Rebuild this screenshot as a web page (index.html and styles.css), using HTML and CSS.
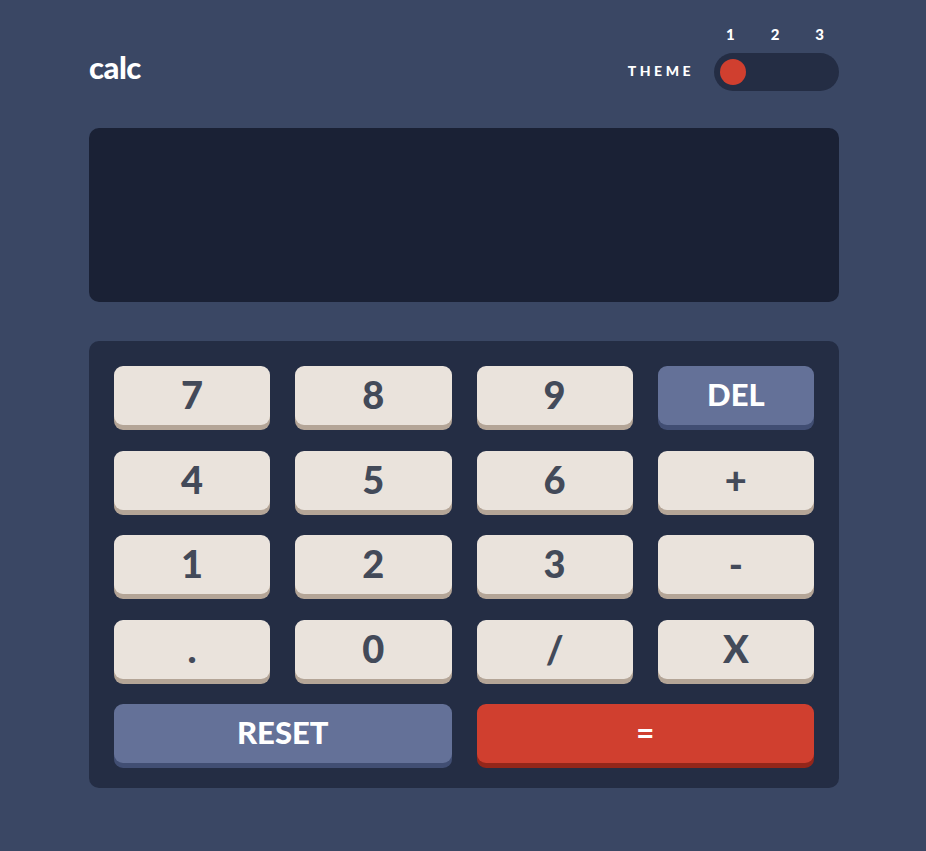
FILE: index.html
```html
<!DOCTYPE html>
<html lang="en">
<head>
<meta charset="utf-8">
<title>calc</title>
<link rel="stylesheet" href="styles.css">
</head>
<body>
<main class="calc">
  <header class="top">
    <h1 class="logo">calc</h1>
    <div class="theme">
      <span class="theme-label">THEME</span>
      <div class="theme-switch">
        <div class="theme-nums"><span>1</span><span>2</span><span>3</span></div>
        <div class="toggle"><span class="knob"></span></div>
      </div>
    </div>
  </header>
  <section class="screen"></section>
  <section class="keypad">
    <button class="key">7</button>
    <button class="key">8</button>
    <button class="key">9</button>
    <button class="key key-blue">DEL</button>
    <button class="key">4</button>
    <button class="key">5</button>
    <button class="key">6</button>
    <button class="key">+</button>
    <button class="key">1</button>
    <button class="key">2</button>
    <button class="key">3</button>
    <button class="key">-</button>
    <button class="key">.</button>
    <button class="key">0</button>
    <button class="key">/</button>
    <button class="key">X</button>
    <button class="key key-blue key-wide">RESET</button>
    <button class="key key-red key-wide">=</button>
  </section>
</main>
</body>
</html>
```
FILE: styles.css
```css
* { box-sizing: border-box; }
html, body { margin: 0; padding: 0; }
body {
  background: #3a4764;
  font-family: "Lato", "Liberation Sans", sans-serif;
  color: #ffffff;
  min-height: 851px;
}
.calc {
  width: 750px;
  margin: 0 0 0 89px;
  padding-top: 26px;
}
.top {
  display: flex;
  justify-content: space-between;
  align-items: flex-end;
  height: 65px;
}
.logo {
  margin: 0 0 8px 0;
  font-size: 31px;
  font-weight: 900;
  letter-spacing: -0.5px;
  line-height: 1;
}
.theme {
  display: flex;
  align-items: flex-end;
  gap: 20px;
}
.theme-label {
  font-size: 14px;
  font-weight: 900;
  letter-spacing: 3.5px;
  margin-right: 0;
  margin-bottom: 12px;
}
.theme-switch {
  display: flex;
  flex-direction: column;
  width: 125px;
}
.theme-nums {
  display: flex;
  justify-content: space-between;
  padding: 0 15px 0 12px;
  font-size: 15px;
  font-weight: 900;
  height: 17px;
  line-height: 17px;
  margin-bottom: 10px;
}
.toggle {
  height: 38px;
  border-radius: 19px;
  background: #242d44;
  padding: 6px;
  display: flex;
  align-items: center;
}
.knob {
  width: 26px;
  height: 26px;
  border-radius: 50%;
  background: #d03f2f;
}
.screen {
  margin-top: 37px;
  height: 174px;
  border-radius: 10px;
  background: #1a2135;
}
.keypad {
  margin-top: 39px;
  background: #242d44;
  border-radius: 10px;
  padding: 25px;
  display: grid;
  grid-template-columns: repeat(4, 1fr);
  column-gap: 25px;
  row-gap: 25.5px;
}
.key {
  height: 59px;
  border: 0;
  border-radius: 9px;
  background: #eae3dc;
  box-shadow: 0 5px 0 #b4a597;
  color: #434a59;
  font-family: "Lato", "Liberation Sans", sans-serif;
  font-weight: 900;
  font-size: 38px;
  line-height: 1;
  padding: 0 0 3px 0;
  cursor: pointer;
}
.key-blue {
  background: #647198;
  box-shadow: 0 5px 0 #414e73;
  color: #ffffff;
  font-size: 31px;
}
.key-red {
  background: #d03f2f;
  box-shadow: 0 5px 0 #93261a;
  color: #ffffff;
  font-size: 31px;
}
.key-wide { grid-column: span 2; }
```
